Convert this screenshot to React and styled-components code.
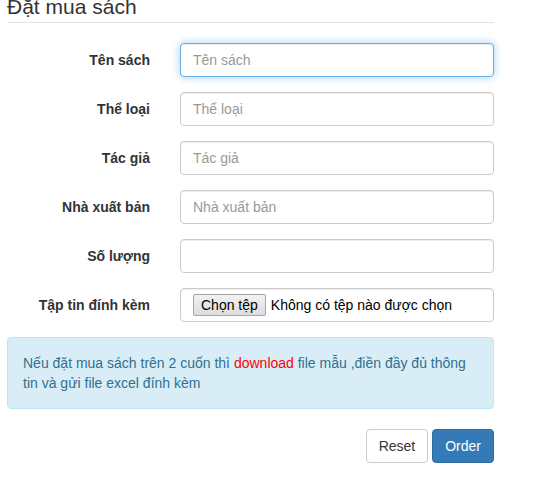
import React from "react";
import styled, { createGlobalStyle, css } from "styled-components";

const fields = [
  { label: "Tên sách", placeholder: "Tên sách", focused: true },
  { label: "Thể loại", placeholder: "Thể loại" },
  { label: "Tác giả", placeholder: "Tác giả" },
  { label: "Nhà xuất bản", placeholder: "Nhà xuất bản" },
  { label: "Số lượng", placeholder: "" },
];

const App = () => {
  return (
    <>
      <GlobalStyle />
      <Page>
        <Legend>Đặt mua sách</Legend>
        <Form onSubmit={(e) => e.preventDefault()}>
          {fields.map((f) => (
            <Row key={f.label}>
              <Label>{f.label}</Label>
              <Input
                type="text"
                placeholder={f.placeholder}
                focused={f.focused ? 1 : 0}
                autoFocus={f.focused}
              />
            </Row>
          ))}
          <Row>
            <Label>Tập tin đính kèm</Label>
            <FileBox>
              <HiddenFile type="file" id="file" />
              <FileButton htmlFor="file">Chọn tệp</FileButton>
              <FileName>Không có tệp nào được chọn</FileName>
            </FileBox>
          </Row>
          <Alert>
            Nếu đặt mua sách trên 2 cuốn thì <Download href="#">download</Download> file mẫu ,điền
            đầy đủ thông tin và gửi file excel đính kèm
          </Alert>
          <Actions>
            <Button type="reset">Reset</Button>
            <Button type="submit" primary={1}>
              Order
            </Button>
          </Actions>
        </Form>
      </Page>
    </>
  );
};
export default App;

const GlobalStyle = createGlobalStyle`
  * { box-sizing: border-box; }
  body {
    margin: 0;
    background: #fff;
    font-family: "Liberation Sans", Arial, Helvetica, sans-serif;
    font-size: 14px;
    line-height: 1.42857;
    color: #333;
    overflow: hidden;
  }
`;

const Page = styled.div`
  width: 487px;
  margin-left: 7px;
`;

const Legend = styled.div`
  margin-top: -8px;
  margin-bottom: 20px;
  font-size: 21px;
  line-height: 30px;
  color: #333;
  border-bottom: 1px solid #e5e5e5;
`;

const Form = styled.form`
  display: flex;
  flex-direction: column;
`;

const Row = styled.div`
  display: grid;
  grid-template-columns: 143px 314px;
  column-gap: 30px;
  margin-bottom: 15px;
`;

const Label = styled.label`
  padding-top: 7px;
  text-align: right;
  font-weight: bold;
  line-height: 20px;
`;

const fieldBox = css`
  height: 34px;
  padding: 6px 12px;
  font-size: 14px;
  line-height: 20px;
  color: #555;
  background: #fff;
  border: 1px solid #ccc;
  border-radius: 4px;
  box-shadow: inset 0 1px 1px rgba(0, 0, 0, 0.075);
`;

const Input = styled.input`
  ${fieldBox}
  width: 100%;
  font-family: inherit;
  outline: none;
  &::placeholder {
    color: #999;
  }
  ${(p) =>
    p.focused &&
    css`
      border-color: #66afe9;
      box-shadow: inset 0 1px 1px rgba(0, 0, 0, 0.075), 0 0 8px rgba(102, 175, 233, 0.6);
    `}
  &:focus {
    border-color: #66afe9;
    box-shadow: inset 0 1px 1px rgba(0, 0, 0, 0.075), 0 0 8px rgba(102, 175, 233, 0.6);
  }
`;

const FileBox = styled.div`
  ${fieldBox}
  display: flex;
  align-items: center;
  gap: 5px;
  color: #000;
`;

const HiddenFile = styled.input`
  display: none;
`;

const FileButton = styled.label`
  display: inline-flex;
  align-items: center;
  height: 22px;
  padding: 0 7px;
  background: linear-gradient(#f2f2f2, #dddddd);
  border: 1px solid #a5a5a5;
  border-radius: 2px;
  font-size: 14px;
  color: #000;
  cursor: pointer;
`;

const FileName = styled.span`
  white-space: nowrap;
  font-size: 14px;
`;

const Alert = styled.div`
  padding: 15px;
  margin-bottom: 20px;
  color: #31708f;
  background: #d9edf7;
  border: 1px solid #bce8f1;
  border-radius: 4px;
  line-height: 20px;
`;

const Download = styled.a`
  color: #f00;
  text-decoration: none;
`;

const Actions = styled.div`
  display: flex;
  justify-content: flex-end;
  gap: 4px;
`;

const Button = styled.button`
  height: 34px;
  padding: 6px 12px;
  font-family: inherit;
  font-size: 14px;
  line-height: 20px;
  border-radius: 4px;
  border: 1px solid ${(p) => (p.primary ? "#2e6da4" : "#ccc")};
  background: ${(p) => (p.primary ? "#337ab7" : "#fff")};
  color: ${(p) => (p.primary ? "#fff" : "#333")};
  cursor: pointer;
`;
